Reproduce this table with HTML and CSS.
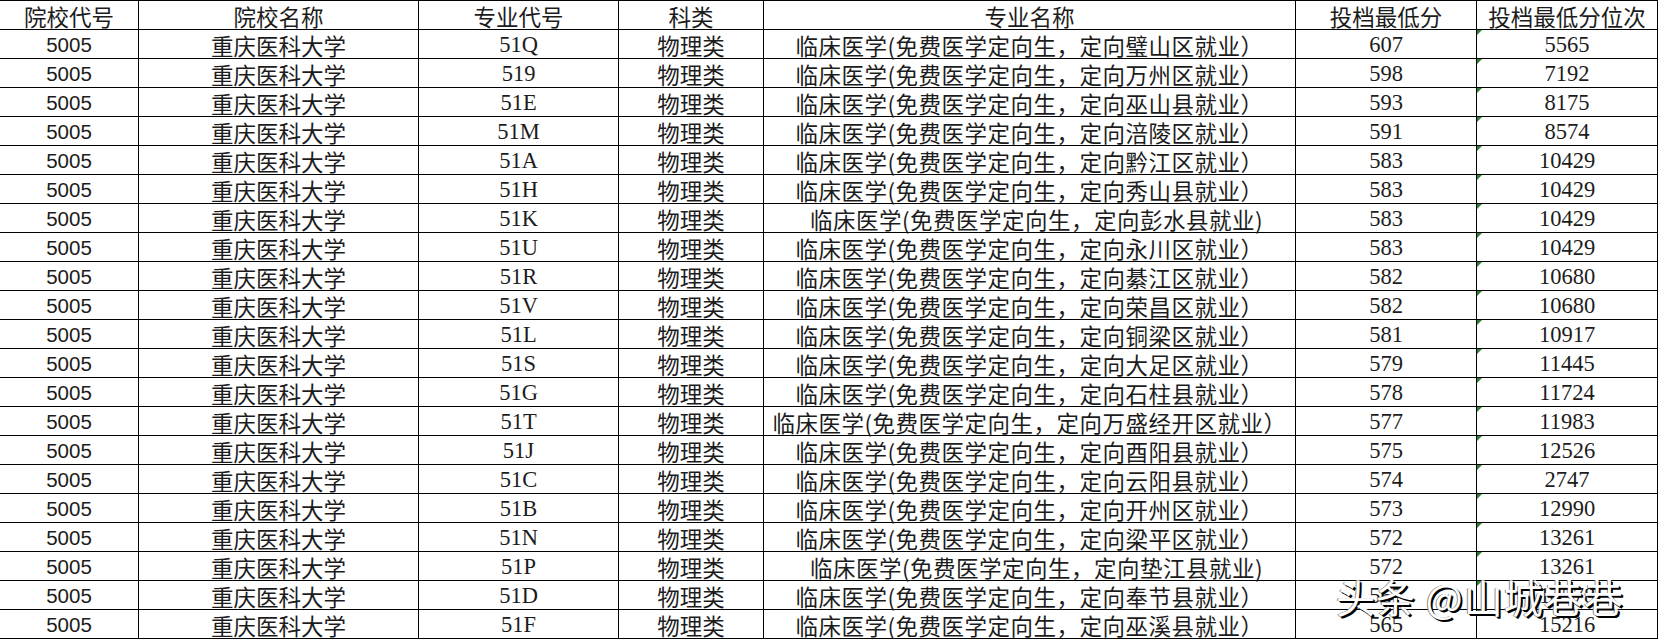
FILE: index.html
```html
<!DOCTYPE html>
<html lang="zh-CN">
<head>
<meta charset="utf-8">
<title>重庆医科大学 投档</title>
<link rel="stylesheet" href="styles.css">
</head>
<body>
<div class="sheet">
<table class="grid">
<colgroup>
<col class="c1"><col class="c2"><col class="c3"><col class="c4"><col class="c5"><col class="c6"><col class="c7">
</colgroup>
<thead>
<tr><th>院校代号</th><th>院校名称</th><th>专业代号</th><th>科类</th><th>专业名称</th><th>投档最低分</th><th>投档最低分位次</th></tr>
</thead>
<tbody>
<tr><td class="code">5005</td><td>重庆医科大学</td><td class="num">51Q</td><td>物理类</td><td class="major">临床医学(免费医学定向生，定向璧山区就业）</td><td class="num">607</td><td class="num rank">5565</td></tr>
<tr><td class="code">5005</td><td>重庆医科大学</td><td class="num">519</td><td>物理类</td><td class="major">临床医学(免费医学定向生，定向万州区就业）</td><td class="num">598</td><td class="num rank">7192</td></tr>
<tr><td class="code">5005</td><td>重庆医科大学</td><td class="num">51E</td><td>物理类</td><td class="major">临床医学(免费医学定向生，定向巫山县就业）</td><td class="num">593</td><td class="num rank">8175</td></tr>
<tr><td class="code">5005</td><td>重庆医科大学</td><td class="num">51M</td><td>物理类</td><td class="major">临床医学(免费医学定向生，定向涪陵区就业）</td><td class="num">591</td><td class="num rank">8574</td></tr>
<tr><td class="code">5005</td><td>重庆医科大学</td><td class="num">51A</td><td>物理类</td><td class="major">临床医学(免费医学定向生，定向黔江区就业）</td><td class="num">583</td><td class="num rank">10429</td></tr>
<tr><td class="code">5005</td><td>重庆医科大学</td><td class="num">51H</td><td>物理类</td><td class="major">临床医学(免费医学定向生，定向秀山县就业）</td><td class="num">583</td><td class="num rank">10429</td></tr>
<tr><td class="code">5005</td><td>重庆医科大学</td><td class="num">51K</td><td>物理类</td><td class="major shift">临床医学(免费医学定向生，定向彭水县就业)</td><td class="num">583</td><td class="num rank">10429</td></tr>
<tr><td class="code">5005</td><td>重庆医科大学</td><td class="num">51U</td><td>物理类</td><td class="major">临床医学(免费医学定向生，定向永川区就业）</td><td class="num">583</td><td class="num rank">10429</td></tr>
<tr><td class="code">5005</td><td>重庆医科大学</td><td class="num">51R</td><td>物理类</td><td class="major">临床医学(免费医学定向生，定向綦江区就业）</td><td class="num">582</td><td class="num rank">10680</td></tr>
<tr><td class="code">5005</td><td>重庆医科大学</td><td class="num">51V</td><td>物理类</td><td class="major">临床医学(免费医学定向生，定向荣昌区就业）</td><td class="num">582</td><td class="num rank">10680</td></tr>
<tr><td class="code">5005</td><td>重庆医科大学</td><td class="num">51L</td><td>物理类</td><td class="major">临床医学(免费医学定向生，定向铜梁区就业）</td><td class="num">581</td><td class="num rank">10917</td></tr>
<tr><td class="code">5005</td><td>重庆医科大学</td><td class="num">51S</td><td>物理类</td><td class="major">临床医学(免费医学定向生，定向大足区就业）</td><td class="num">579</td><td class="num rank">11445</td></tr>
<tr><td class="code">5005</td><td>重庆医科大学</td><td class="num">51G</td><td>物理类</td><td class="major">临床医学(免费医学定向生，定向石柱县就业）</td><td class="num">578</td><td class="num rank">11724</td></tr>
<tr><td class="code">5005</td><td>重庆医科大学</td><td class="num">51T</td><td>物理类</td><td class="major">临床医学(免费医学定向生，定向万盛经开区就业）</td><td class="num">577</td><td class="num rank">11983</td></tr>
<tr><td class="code">5005</td><td>重庆医科大学</td><td class="num">51J</td><td>物理类</td><td class="major">临床医学(免费医学定向生，定向酉阳县就业）</td><td class="num">575</td><td class="num rank">12526</td></tr>
<tr><td class="code">5005</td><td>重庆医科大学</td><td class="num">51C</td><td>物理类</td><td class="major">临床医学(免费医学定向生，定向云阳县就业）</td><td class="num">574</td><td class="num rank">2747</td></tr>
<tr><td class="code">5005</td><td>重庆医科大学</td><td class="num">51B</td><td>物理类</td><td class="major">临床医学(免费医学定向生，定向开州区就业）</td><td class="num">573</td><td class="num rank">12990</td></tr>
<tr><td class="code">5005</td><td>重庆医科大学</td><td class="num">51N</td><td>物理类</td><td class="major">临床医学(免费医学定向生，定向梁平区就业）</td><td class="num">572</td><td class="num rank">13261</td></tr>
<tr><td class="code">5005</td><td>重庆医科大学</td><td class="num">51P</td><td>物理类</td><td class="major shift">临床医学(免费医学定向生，定向垫江县就业)</td><td class="num">572</td><td class="num rank">13261</td></tr>
<tr><td class="code">5005</td><td>重庆医科大学</td><td class="num">51D</td><td>物理类</td><td class="major">临床医学(免费医学定向生，定向奉节县就业）</td><td class="num">567</td><td class="num rank">14578</td></tr>
<tr><td class="code">5005</td><td>重庆医科大学</td><td class="num">51F</td><td>物理类</td><td class="major">临床医学(免费医学定向生，定向巫溪县就业）</td><td class="num">565</td><td class="num rank">15216</td></tr>
</tbody>
</table>
<div class="watermark">头条 @山城巷巷</div>
</div>
</body>
</html>
```

FILE: styles.css
```css
html, body {
  margin: 0;
  padding: 0;
  background: #ffffff;
}

.sheet {
  position: relative;
  width: 1659px;
  height: 639px;
  overflow: hidden;
}

.grid {
  border-collapse: collapse;
  table-layout: fixed;
  width: 1658px;
  margin-left: -1px;
  font-family: "Noto Sans CJK SC", "Noto Sans", sans-serif;
  font-size: 22.5px;
  color: #1c1c1c;
}

.c1 { width: 139px; }
.c2 { width: 280px; }
.c3 { width: 200px; }
.c4 { width: 145px; }
.c5 { width: 532px; }
.c6 { width: 181px; }
.c7 { width: 181px; }

.grid tr {
  height: 29px;
}

.grid th,
.grid td {
  border: 1px solid #000;
  padding: 2px 0 0 0;
  line-height: 26px;
  text-align: center;
  vertical-align: middle;
  white-space: nowrap;
  font-weight: 400;
}

.grid td.code {
  font-family: "Liberation Sans", Arial, sans-serif;
  font-size: 20.5px;
}

.grid td.num {
  font-family: "Liberation Serif", "Times New Roman", serif;
  font-size: 22.5px;
}

.grid td.major {
  letter-spacing: 0.5px;
}

.grid td.shift {
  padding-left: 14px;
}

.grid td.rank {
  position: relative;
}

.grid td.rank::before {
  content: "";
  position: absolute;
  top: 0;
  left: 0;
  width: 0;
  height: 0;
  border-top: 5px solid #2e7d32;
  border-right: 5px solid transparent;
}

.watermark {
  position: absolute;
  left: 1336px;
  top: 574px;
  font-family: "Noto Sans CJK SC", "Noto Sans", sans-serif;
  font-size: 39px;
  line-height: 44px;
  letter-spacing: 1px;
  color: #ffffff;
  white-space: nowrap;
  text-shadow: 2px 2px 0 #000, 1px 1px 0 #333, -1px 0 0 #888;
}
```
